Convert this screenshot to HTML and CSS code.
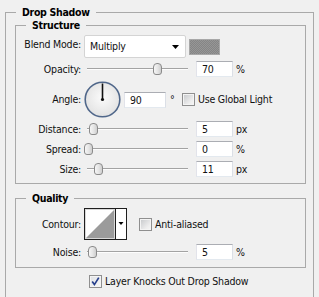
FILE: index.html
```html
<!DOCTYPE html>
<html>
<head>
<meta charset="utf-8">
<link rel="stylesheet" href="styles.css">
</head>
<body>
<fieldset class="group outer">
  <legend>Drop Shadow</legend>
  <fieldset class="group sub structure">
    <legend>Structure</legend>
    <div class="row row-blend">
      <span class="label label-top">Blend Mode:</span>
      <div class="select"><span class="select-text">Multiply</span><svg class="caret" width="7" height="4" viewBox="0 0 7 4"><polygon points="0,0 7,0 3.5,4" fill="#000"/></svg></div>
      <span class="swatch"></span>
    </div>
    <div class="row row-opacity">
      <span class="label">Opacity:</span>
      <div class="slider"><span class="track"></span><span class="thumb" style="left:70px"></span></div>
      <span class="input">70</span><span class="unit">%</span>
    </div>
    <div class="row row-angle">
      <span class="label">Angle:</span>
      <svg class="dial" width="37" height="37" viewBox="0 0 37 37">
        <defs>
          <radialGradient id="dg" cx="50%" cy="45%" r="55%">
            <stop offset="0" stop-color="#fbfbfb"/>
            <stop offset="1" stop-color="#e2e2e2"/>
          </radialGradient>
        </defs>
        <circle cx="18.5" cy="18.5" r="17.3" fill="url(#dg)" stroke="#50678a" stroke-width="1.6"/>
        <line x1="18.5" y1="18.5" x2="18.5" y2="2.5" stroke="#111" stroke-width="1.6"/>
        <circle cx="18.5" cy="18.5" r="1.6" fill="#111"/>
      </svg>
      <span class="input input-angle">90</span>
      <span class="deg">°</span>
      <span class="check"></span>
      <span class="check-label">Use Global Light</span>
    </div>
    <div class="row row-slider">
      <span class="label">Distance:</span>
      <div class="slider"><span class="track"></span><span class="thumb" style="left:6px"></span></div>
      <span class="input">5</span><span class="unit">px</span>
    </div>
    <div class="row row-slider">
      <span class="label">Spread:</span>
      <div class="slider"><span class="track"></span><span class="thumb" style="left:1.5px"></span></div>
      <span class="input">0</span><span class="unit">%</span>
    </div>
    <div class="row row-slider">
      <span class="label">Size:</span>
      <div class="slider"><span class="track"></span><span class="thumb" style="left:11px"></span></div>
      <span class="input">11</span><span class="unit">px</span>
    </div>
  </fieldset>
  <fieldset class="group sub quality">
    <legend>Quality</legend>
    <div class="row row-contour">
      <span class="label">Contour:</span>
      <svg class="contour" width="43" height="32" viewBox="0 0 43 32">
        <rect x="0.5" y="0.5" width="42" height="31" fill="#fff" stroke="#1e1e1e"/>
        <rect x="1.5" y="1.5" width="29" height="29" fill="#fff" stroke="#d8d8d8"/>
        <polygon points="2,30 30,2 30,30" fill="#9b9b9b"/>
        <line x1="31.5" y1="1" x2="31.5" y2="31" stroke="#1e1e1e"/>
        <polygon points="34.5,14 39.5,14 37,17" fill="#000"/>
      </svg>
      <span class="check check-aa"></span>
      <span class="check-label">Anti-aliased</span>
    </div>
    <div class="row row-noise">
      <span class="label">Noise:</span>
      <div class="slider"><span class="track"></span><span class="thumb" style="left:5.5px"></span></div>
      <span class="input">5</span><span class="unit">%</span>
    </div>
  </fieldset>
  <div class="row row-knock">
    <span class="check checked"><svg width="11" height="11" viewBox="0 0 11 11"><path d="M2.2 5.6 L4.4 8.6 L8.8 1.6" fill="none" stroke="#263f8c" stroke-width="1.7"/></svg></span>
    <span class="check-label">Layer Knocks Out Drop Shadow</span>
  </div>
</fieldset>
</body>
</html>
```

FILE: styles.css
```css
* { box-sizing: border-box; }
html, body { margin: 0; padding: 0; background: #f0f0f0; }
body {
  font-family: "DejaVu Sans Condensed", "DejaVu Sans", sans-serif;
  font-size: 10.5px;
  letter-spacing: -0.2px;
  line-height: 13px;
  color: #111;
  width: 319px;
  height: 297px;
  overflow: hidden;
}
.group {
  border: 1px solid #a9a9a9;
  margin: 0;
  min-width: 0;
}
.group > legend {
  padding: 0 6px;
  line-height: 13px;
  font-weight: bold;
  letter-spacing: -0.3px;
  color: #000;
}
.outer {
  margin: 6px 0 0 5px;
  width: 309px;
  padding: 0 7px 40px 9px;
}
.outer > legend { margin-left: 1px; }
.sub { padding: 0 0 4px 0; }
.sub > legend { margin-left: 10px; }
.quality { margin-top: 8px; padding-bottom: 6px; }

.row { display: flex; align-items: center; }
.label { width: 65px; flex: none; text-align: right; }
.label-top { align-self: flex-start; padding-top: 3px; }

.row-blend { height: 23px; margin-top: 3px; }
.row-opacity { height: 22px; }
.row-angle { height: 39px; }
.row-slider { height: 20px; }
.row-contour { height: 38px; }
.row-noise { height: 18px; }

.select {
  margin-left: 3px;
  width: 102px;
  height: 23px;
  background: #fff;
  border: 1px solid #d4d4d4;
  border-radius: 2px;
  display: flex;
  align-items: center;
  padding-left: 5px;
}
.select-text { flex: 1; }
.caret { margin-right: 6px; }
.swatch {
  margin-left: 3px;
  width: 31px;
  height: 16px;
  border: 1px solid #a8a8a8;
  background: repeating-conic-gradient(#858585 0 25%, #969696 0 50%) 0 0 / 2px 2px;
}

.slider {
  position: relative;
  margin-left: 6px;
  width: 101px;
  height: 12px;
  flex: none;
}
.track {
  position: absolute;
  left: 0; right: 0; top: 5px;
  height: 2px;
  border-top: 1px solid #a3a3a3;
  border-bottom: 1px solid #fdfdfd;
}
.thumb {
  position: absolute;
  top: 0;
  width: 9px;
  height: 12px;
  margin-left: -4.5px;
  border: 1px solid #8b8b8b;
  border-radius: 4px 4px 3px 3px;
  background: linear-gradient(to right, #f6f6f6, #e6e6e6 50%, #cfcfcf);
}

.input {
  margin-left: 8px;
  width: 37px;
  height: 16px;
  flex: none;
  background: #fff;
  border: 1px solid;
  border-color: #abadb3 #dbdfe6 #e3e9ef #e2e3ea;
  padding-left: 5px;
  line-height: 14px;
}
.unit { margin-left: 3px; }

.dial { margin-left: 3px; flex: none; }
.input-angle { margin-left: 3px; width: 42px; }
.deg { width: 16px; padding-left: 4px; flex: none; }

.check {
  width: 13px;
  height: 13px;
  flex: none;
  border: 1px solid #8f8f8f;
  background: linear-gradient(135deg, #c5c7ca, #eeeeee 70%, #f6f6f6);
  box-shadow: inset 0 0 0 1px #f4f4f4;
  display: flex;
  align-items: center;
  justify-content: center;
}
.check-label { margin-left: 3px; }
.contour { margin-left: 3px; flex: none; }
.check-aa { margin-left: 12px; }

.row-knock { height: 14px; margin-top: 6px; padding-left: 74px; }
.checked { background: linear-gradient(135deg, #dfe1e4, #f8f8f8); }
```
